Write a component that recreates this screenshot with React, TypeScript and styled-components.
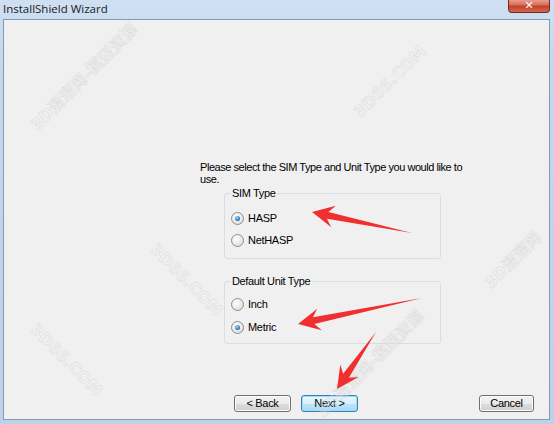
import React from 'react';
import styled, { createGlobalStyle } from 'styled-components';

const GlobalStyle = createGlobalStyle`
  html, body {
    margin: 0;
    padding: 0;
    background: #ffffff;
  }
`;

// window chrome
const Window = styled.div`
  position: relative;
  width: 554px;
  height: 424px;
  box-sizing: border-box;
  display: flex;
  flex-direction: column;
  background: linear-gradient(180deg, #cfe0f2 0px, #c4d8ee 60px, #bcd2ea 424px);
  overflow: hidden;
  font-family: 'Liberation Sans', Arial, sans-serif;
`;

const TitleBar = styled.div`
  height: 19px;
  display: flex;
  align-items: flex-start;
  justify-content: space-between;
  padding-left: 3px;
  padding-right: 4px;
`;

const Title = styled.div`
  font-family: 'Open Sans', 'Noto Sans', sans-serif;
  font-size: 11.5px;
  line-height: 18px;
  color: #1a1a1a;
`;

const CloseButton = styled.div`
  width: 42px;
  height: 14px;
  margin-top: -1px;
  box-sizing: border-box;
  border: 1px solid #6b2a22;
  border-top: none;
  border-radius: 0 0 4px 4px;
  background: linear-gradient(180deg, #e8a898 0%, #d9705a 45%, #c2422b 55%, #d6674b 100%);
  display: flex;
  align-items: center;
  justify-content: center;
  color: #fff;
  font-family: 'DejaVu Sans', sans-serif;
  font-weight: bold;
  font-size: 11px;
  line-height: 11px;
`;

const Panel = styled.div`
  flex: 1;
  margin: 0 4px 4px 3px;
  border: 1px solid #8799ad;
  background: #f0f0f0;
  display: flex;
  flex-direction: column;
  font-size: 11px;
  color: #000;
`;

const Body = styled.div`
  flex: 1;
  padding: 141px 0 0 196px;
  display: flex;
  flex-direction: column;
`;

const Prompt = styled.p`
  margin: 0;
  width: 280px;
  line-height: 12px;
  letter-spacing: -0.45px;
`;

const GroupBox = styled.fieldset<{ top: number; padTop: number; padBottom: number }>`
  width: 217px;
  box-sizing: border-box;
  margin: ${(p) => p.top}px 0 0 24px;
  padding: ${(p) => p.padTop}px 0 ${(p) => p.padBottom}px 6px;
  border: 1px solid #d5dfe5;
  border-radius: 3px;
`;

const Legend = styled.legend`
  padding: 0 2px;
  margin-left: -1px;
  line-height: 12px;
  letter-spacing: -0.35px;
`;

const Option = styled.label<{ h?: number }>`
  display: flex;
  align-items: center;
  gap: 4px;
  height: ${(p) => p.h || 22}px;
  letter-spacing: -0.3px;
`;

const RadioCircle = styled.span<{ checked?: boolean }>`
  width: 11px;
  height: 11px;
  border-radius: 50%;
  border: 1px solid #8e8f8f;
  background: radial-gradient(circle at 40% 35%, #ffffff 0%, #e6e6e6 60%, #d0d0d0 100%);
  display: flex;
  align-items: center;
  justify-content: center;

  &::after {
    content: '';
    display: ${(p) => (p.checked ? 'block' : 'none')};
    width: 5px;
    height: 5px;
    border-radius: 50%;
    background: radial-gradient(circle at 40% 35%, #9fd5f7 0%, #2a6fa8 70%, #1b4f80 100%);
  }
`;

const ButtonRow = styled.div`
  height: 24px;
  display: flex;
  align-items: flex-start;
  padding-left: 230px;
`;

const Button = styled.button<{ focused?: boolean; gapLeft?: number; w?: number }>`
  width: ${(p) => p.w || 57}px;
  height: 17px;
  margin-left: ${(p) => p.gapLeft || 0}px;
  padding: 0;
  box-sizing: border-box;
  border: 1px solid ${(p) => (p.focused ? '#3c7fb1' : '#707070')};
  border-radius: 3px;
  background: ${(p) =>
    p.focused
      ? 'linear-gradient(180deg, #eaf6fd 0%, #d9f0fc 50%, #bee6fd 51%, #a7d9f5 100%)'
      : 'linear-gradient(180deg, #f2f2f2 0%, #ebebeb 50%, #dddddd 51%, #cfcfcf 100%)'};
  box-shadow: inset 0 0 0 1px ${(p) => (p.focused ? '#9edcf7' : '#fcfcfc')};
  font-family: 'Liberation Sans', Arial, sans-serif;
  font-size: 11px;
  line-height: 15px;
  color: #000;
  letter-spacing: -0.3px;
`;

const Arrows = styled.svg`
  position: absolute;
  left: 0;
  top: 0;
  pointer-events: none;
`;

const Watermark = styled.div<{ angle: number }>`
  position: absolute;
  font-family: 'DejaVu Sans', 'Noto Sans CJK SC', sans-serif;
  font-weight: bold;
  font-size: 16px;
  color: transparent;
  -webkit-text-stroke: 0.5px #dadada;
  transform: rotate(${(p) => p.angle}deg);
  transform-origin: left top;
  white-space: nowrap;
  pointer-events: none;
`;

const arrow = (tipX: number, tipY: number, tailX: number, tailY: number) => {
  const dx = tailX - tipX;
  const dy = tailY - tipY;
  const len = Math.sqrt(dx * dx + dy * dy);
  const ux = dx / len;
  const uy = dy / len;
  const nx = -uy;
  const ny = ux;
  const head = 22;
  const hw = 11;
  const sw = 3.5;
  const bx = tipX + ux * head;
  const by = tipY + uy * head;
  const nb = tipX + ux * (head - 6);
  const nbY = tipY + uy * (head - 6);
  const pts = [
    [tipX, tipY],
    [bx + nx * hw, by + ny * hw],
    [nb + nx * sw, nbY + ny * sw],
    [tailX, tailY],
    [nb - nx * sw, nbY - ny * sw],
    [bx - nx * hw, by - ny * hw],
  ];
  return pts.map((p) => `${p[0].toFixed(1)},${p[1].toFixed(1)}`).join(' ');
};

const App = () => {
  return (
    <Window>
      <GlobalStyle />
      <TitleBar>
        <Title>InstallShield Wizard</Title>
        <CloseButton>✕</CloseButton>
      </TitleBar>
      <Panel>
        <Body>
          <Prompt>Please select the SIM Type and Unit Type you would like to use.</Prompt>
          <GroupBox top={2} padTop={8} padBottom={7}>
            <Legend>SIM Type</Legend>
            <Option>
              <RadioCircle checked />
              HASP
            </Option>
            <Option>
              <RadioCircle />
              NetHASP
            </Option>
          </GroupBox>
          <GroupBox top={16} padTop={6} padBottom={4}>
            <Legend>Default Unit Type</Legend>
            <Option>
              <RadioCircle />
              Inch
            </Option>
            <Option h={24}>
              <RadioCircle checked />
              Metric
            </Option>
          </GroupBox>
        </Body>
        <ButtonRow>
          <Button>&lt; Back</Button>
          <Button focused gapLeft={10}>Next &gt;</Button>
          <Button gapLeft={121} w={55}>Cancel</Button>
        </ButtonRow>
      </Panel>

      <Watermark angle={-45} style={{ left: 24, top: 118 }}>3D溜溜网-模型资源</Watermark>
      <Watermark angle={-45} style={{ left: 350, top: 108 }}>3D66.COM</Watermark>
      <Watermark angle={45} style={{ left: 160, top: 240 }}>3D66.COM</Watermark>
      <Watermark angle={45} style={{ left: 40, top: 320 }}>3D66.COM</Watermark>
      <Watermark angle={-45} style={{ left: 478, top: 276 }}>3D溜溜网</Watermark>
      <Watermark angle={-45} style={{ left: 310, top: 405 }}>3D溜溜网-模型资源</Watermark>

      <Arrows width={554} height={424} viewBox="0 0 554 424">
        <polygon points={arrow(312, 212, 412, 233)} fill="#f03030" />
        <polygon points={arrow(298, 324, 422, 298)} fill="#f03030" />
        <polygon points={arrow(337, 389, 376, 332)} fill="#f03030" />
      </Arrows>
    </Window>
  );
};

export default App;
